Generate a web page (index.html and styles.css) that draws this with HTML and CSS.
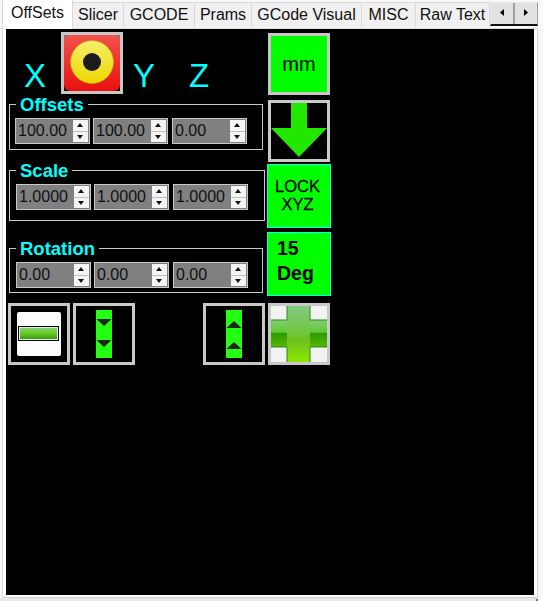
FILE: index.html
```html
<!DOCTYPE html>
<html lang="en">
<head>
    <meta charset="UTF-8">
    <title>OffSets</title>
    <link rel="stylesheet" href="styles.css">
</head>
<body>
    <div class="window">
        <div class="tab-strip">
            <div class="tab active">OffSets</div>
            <div class="tab tab-slicer">Slicer</div>
            <div class="tab tab-gcode">GCODE</div>
            <div class="tab tab-prams">Prams</div>
            <div class="tab tab-visual">GCode Visual</div>
            <div class="tab tab-misc">MISC</div>
            <div class="tab tab-raw">Raw Text</div>
            <div class="tab-scroll">
                <div class="scroll-btn"><svg width="4" height="7" viewBox="0 0 4 7"><path d="M4 0V7L0 3.5Z"/></svg></div>
                <div class="scroll-btn"><svg width="4" height="7" viewBox="0 0 4 7"><path d="M0 0V7L4 3.5Z"/></svg></div>
            </div>
        </div>

        <div class="tab-page">
            <div class="page-grid">
                <div class="left-col">
                    <div class="axis-row">
                        <span class="axis axis-x">X</span>
                        <div class="img-btn target-btn">
                            <svg width="56" height="56" viewBox="0 0 56 56">
                                <defs>
                                    <linearGradient id="redFill" x1="0" y1="0" x2="0" y2="1">
                                        <stop offset="0" stop-color="#f4514d"/>
                                        <stop offset="1" stop-color="#e81010"/>
                                    </linearGradient>
                                    <linearGradient id="yellowFill" x1="0" y1="0" x2="0" y2="1">
                                        <stop offset="0" stop-color="#f6ee6a"/>
                                        <stop offset="1" stop-color="#eed800"/>
                                    </linearGradient>
                                </defs>
                                <rect width="56" height="28" fill="#777"/>
                                <rect y="28" width="56" height="28" fill="#000"/>
                                <rect width="56" height="56" rx="6" fill="url(#redFill)"/>
                                <circle cx="28" cy="27" r="21.5" fill="url(#yellowFill)" stroke="#b9a412" stroke-width="0.8"/>
                                <circle cx="28" cy="27" r="9" fill="#1c1c1c"/>
                            </svg>
                        </div>
                        <span class="axis axis-y">Y</span>
                        <span class="axis axis-z">Z</span>
                    </div>

                    <fieldset class="group group-offsets">
                        <legend>Offsets</legend>
                        <div class="spin-row">
                            <div class="spin"><span class="spin-value">100.00</span><div class="spin-btns"><div class="spin-up"></div><div class="spin-down"></div></div></div>
                            <div class="spin"><span class="spin-value">100.00</span><div class="spin-btns"><div class="spin-up"></div><div class="spin-down"></div></div></div>
                            <div class="spin"><span class="spin-value">0.00</span><div class="spin-btns"><div class="spin-up"></div><div class="spin-down"></div></div></div>
                        </div>
                    </fieldset>

                    <fieldset class="group group-scale">
                        <legend>Scale</legend>
                        <div class="spin-row">
                            <div class="spin"><span class="spin-value">1.0000</span><div class="spin-btns"><div class="spin-up"></div><div class="spin-down"></div></div></div>
                            <div class="spin"><span class="spin-value">1.0000</span><div class="spin-btns"><div class="spin-up"></div><div class="spin-down"></div></div></div>
                            <div class="spin"><span class="spin-value">1.0000</span><div class="spin-btns"><div class="spin-up"></div><div class="spin-down"></div></div></div>
                        </div>
                    </fieldset>

                    <fieldset class="group group-rotation">
                        <legend>Rotation</legend>
                        <div class="spin-row">
                            <div class="spin"><span class="spin-value">0.00</span><div class="spin-btns"><div class="spin-up"></div><div class="spin-down"></div></div></div>
                            <div class="spin"><span class="spin-value">0.00</span><div class="spin-btns"><div class="spin-up"></div><div class="spin-down"></div></div></div>
                            <div class="spin"><span class="spin-value">0.00</span><div class="spin-btns"><div class="spin-up"></div><div class="spin-down"></div></div></div>
                        </div>
                    </fieldset>

                    <div class="tool-row">
                        <div class="img-btn">
                            <svg width="56" height="56" viewBox="0 0 56 56">
                                <defs>
                                    <linearGradient id="minusFill" x1="0" y1="0" x2="0" y2="1">
                                        <stop offset="0" stop-color="#8fd08a"/>
                                        <stop offset="0.5" stop-color="#66cc22"/>
                                        <stop offset="1" stop-color="#2e8c14"/>
                                    </linearGradient>
                                </defs>
                                <rect x="6" y="6" width="44" height="44" rx="2" fill="#fdfdfd"/>
                                <rect x="7.5" y="20.5" width="40" height="14" fill="url(#minusFill)" stroke="#000"/>
                                <rect x="8.5" y="21.5" width="38" height="12" fill="none" stroke="#dcefd0" stroke-width="1"/>
                            </svg>
                        </div>
                        <div class="img-btn">
                            <svg width="56" height="56" viewBox="0 0 56 56">
                                <rect x="20" y="4" width="16" height="48" fill="#22ff10"/>
                                <path d="M20.5 13H35.5L28 20ZM20.5 34H35.5L28 41Z" fill="#222"/>
                            </svg>
                        </div>
                        <div class="img-btn tool-last">
                            <svg width="56" height="56" viewBox="0 0 56 56">
                                <rect x="20" y="4" width="16" height="48" fill="#22ff10"/>
                                <path d="M20.5 22H35.5L28 15ZM20.5 43H35.5L28 36Z" fill="#222"/>
                            </svg>
                        </div>
                    </div>
                </div>

                <div class="right-col">
                    <div class="green-btn mm-btn">mm</div>
                    <div class="img-btn arrow-btn">
                        <svg width="56" height="56" viewBox="0 0 56 56">
                            <path d="M20 0H36V25H56L28 54L0 25H20Z" fill="#22e800"/>
                        </svg>
                    </div>
                    <div class="green-btn lock-btn">LOCK<br>XYZ</div>
                    <div class="green-btn deg-btn">15<br>Deg</div>
                    <div class="img-btn plus-btn">
                        <svg width="56" height="56" viewBox="0 0 56 56">
                            <defs>
                                <linearGradient id="plusV" x1="0" y1="0" x2="0" y2="1">
                                    <stop offset="0" stop-color="#84c884"/>
                                    <stop offset="0.45" stop-color="#70c840"/>
                                    <stop offset="0.6" stop-color="#6cc020"/>
                                    <stop offset="1" stop-color="#8ee800"/>
                                </linearGradient>
                                <linearGradient id="plusH" x1="0" y1="0" x2="0" y2="1">
                                    <stop offset="0" stop-color="#84cc70"/>
                                    <stop offset="0.45" stop-color="#5fc838"/>
                                    <stop offset="0.5" stop-color="#2f9a00"/>
                                    <stop offset="1" stop-color="#55b800"/>
                                </linearGradient>
                            </defs>
                            <rect width="56" height="56" fill="#f2f2f2"/>
                            <rect y="14" width="56" height="27" fill="url(#plusH)"/>
                            <rect x="16" width="23" height="56" fill="url(#plusV)"/>
                            <path d="M16 0V14H0M39 0V14H56M16 56V41H0M39 56V41H56" fill="none" stroke="#2c8a20" stroke-width="1"/>
                        </svg>
                    </div>
                </div>
            </div>
        </div>
    </div>
    <div class="status-strip"><div class="grip"></div></div>
</body>
</html>
```

FILE: styles.css
```css
* {
    margin: 0;
    padding: 0;
    box-sizing: border-box;
}

body {
    width: 543px;
    height: 601px;
    background: #f8f8f8;
    font-family: "Liberation Sans", Arial, sans-serif;
    overflow: hidden;
}

.window {
    display: flex;
    flex-direction: column;
    height: 598px;
    width: 538px;
}

.tab-strip {
    display: flex;
    align-items: flex-end;
    flex: none;
    height: 29px;
    padding-left: 2px;
    background: #f8f8f8;
    border-bottom: 1px solid #dcdcdc;
    font-size: 16px;
    color: #111;
}

.tab {
    display: flex;
    flex: none;
    align-items: center;
    justify-content: center;
    height: 25px;
    margin-bottom: 1px;
    background: #f0f0f0;
    border-right: 1px solid #d9d9d9;
    border-top: 1px solid #d9d9d9;
}

.tab.active {
    width: 71px;
    height: 29px;
    margin-bottom: -1px;
    background: #fff;
    border-top: 0;
    border-left: 1px solid #d9d9d9;
    padding-bottom: 4px;
}

.tab-slicer { width: 51px; }
.tab-gcode { width: 71px; }
.tab-prams { width: 57px; }
.tab-visual { width: 110px; }
.tab-misc { width: 54px; }
.tab-raw { width: 74px; }

.tab-scroll {
    display: flex;
    flex: none;
    align-self: flex-start;
    width: 48px;
    margin-top: 2px;
    height: 24px;
    border: 1px solid #a0a0a0;
    border-bottom: 2px solid #111;
    border-top-color: #e8e8e8;
    border-left-color: #e8e8e8;
}

.scroll-btn {
    display: flex;
    flex: 1;
    align-items: center;
    justify-content: center;
    padding-bottom: 3px;
    background: #e1e1e1;
    border-right: 2px solid #a0a0a0;
}

.scroll-btn:last-child {
    border-right: 0;
}

.tab-page {
    flex: 1;
    margin-left: 2px;
    padding: 0 3px 2px 3px;
    background: #fff;
    border-left: 1px solid #d9d9d9;
    border-right: 1px solid #d9d9d9;
    border-bottom: 1px solid #d0d0d0;
}

.page-grid {
    display: flex;
    align-items: flex-start;
    gap: 1px;
    height: 100%;
    padding: 4px 0 0 2px;
    background: #000;
}

.status-strip {
    display: flex;
    justify-content: flex-end;
    align-items: flex-end;
    width: 538px;
    height: 3px;
    background: #e8e8e8;
}

.grip {
    width: 2px;
    height: 2px;
    background: #777;
}

.left-col {
    width: 258px;
}

.right-col {
    display: flex;
    flex-direction: column;
    align-items: center;
    width: 64px;
}

.img-btn {
    width: 62px;
    height: 62px;
    flex: none;
    border: 3px solid #c8c8c8;
    background: #000;
}

.img-btn svg {
    display: block;
}

.axis-row {
    display: flex;
    align-items: flex-end;
    height: 61px;
    color: #00ffff;
    font-size: 33px;
}

.axis {
    line-height: 32px;
    margin-bottom: 2px;
}

.axis-x { margin-left: 16px; width: 37px; }
.axis-y { margin-left: 10px; width: 56px; }

.group {
    display: block;
    width: 254px;
    margin-left: 1px;
    padding: 0 5px;
    border: 1px solid #c8c8c8;
    min-width: 0;
}

.group legend {
    margin-left: 1px;
    padding: 2px 4px 0;
    color: #00ffff;
    font-size: 18.5px;
    font-weight: bold;
    line-height: 16px;
}

.group-offsets { height: 55px; margin-top: 1px; }
.group-scale { width: 256px; height: 60px; margin-top: 11px; }
.group-rotation { height: 54px; margin-top: 18px; }

.group-scale .spin-row,
.group-rotation .spin-row {
    padding-left: 1px;
    margin-top: 5px;
}

.group-offsets .spin-row {
    margin-top: 5px;
}

.spin-row {
    display: flex;
}

.spin {
    display: flex;
    align-items: center;
    justify-content: space-between;
    width: 75px;
    height: 26px;
    margin-right: 3px;
    padding: 1px;
    border: 1px solid #c8c8c8;
    background: #808080;
}

.spin:nth-child(2) {
    margin-right: 4px;
}

.spin-value {
    padding-left: 1px;
    font-size: 16px;
    color: #111;
}

.spin-btns {
    display: flex;
    flex-direction: column;
    gap: 1px;
    width: 15px;
    height: 22px;
    background: #c0c0c0;
}

.spin-up,
.spin-down {
    position: relative;
    flex: 1;
    background: #f4f4f4;
}

/* little triangles on the spinner buttons */
.spin-up::after,
.spin-down::after {
    content: '';
    position: absolute;
    left: 4px;
    top: 3px;
    border-left: 3.5px solid transparent;
    border-right: 3.5px solid transparent;
}

.spin-up::after { border-bottom: 4px solid #111; }
.spin-down::after { border-top: 4px solid #111; }

.tool-row {
    display: flex;
    gap: 3px;
    margin-top: 10px;
}

.tool-last {
    margin-left: 65px;
}

.green-btn {
    flex: none;
    background: #00ff00;
    color: #000;
}

.mm-btn {
    display: flex;
    align-items: center;
    justify-content: center;
    width: 62px;
    height: 62px;
    border: 3px solid #c8c8c8;
    font-size: 20px;
}

.arrow-btn {
    margin-top: 5px;
}

.lock-btn {
    width: 64px;
    height: 64px;
    margin-top: 2px;
    padding: 12px 3px 0 0;
    border: 1px solid #00ffff;
    font-size: 16.5px;
    line-height: 18px;
    text-align: center;
    -webkit-text-stroke: 0.3px #000;
}

.deg-btn {
    width: 64px;
    height: 64px;
    margin-top: 4px;
    padding: 3px 0 0 9px;
    border: 1px solid #00ffff;
    font-size: 19.5px;
    font-weight: bold;
    line-height: 25px;
}

.plus-btn {
    margin-top: 7px;
}
```
